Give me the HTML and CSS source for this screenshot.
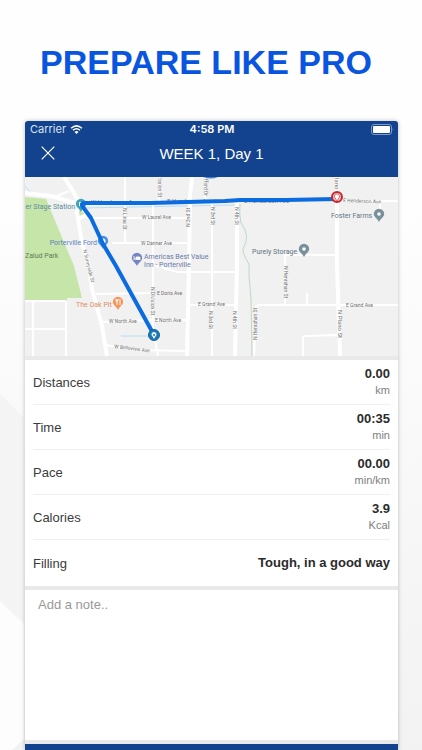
FILE: index.html
```
<!DOCTYPE html>
<html lang="en">
<head>
    <meta charset="UTF-8">
    <meta name="viewport" content="width=device-width, initial-scale=1.0">
    <title>Week 1, Day 1</title>
    <link rel="stylesheet" href="styles.css">
</head>
<body>
    <!-- page backdrop -->
    <svg class="backdrop" viewBox="0 0 422 750" preserveAspectRatio="none" aria-hidden="true">
        <defs>
            <linearGradient id="fade" x1="0" y1="0" x2="0" y2="1">
                <stop offset="0" stop-color="#fefefe"/>
                <stop offset="0.5" stop-color="#f8f8f8"/>
                <stop offset="1" stop-color="#f2f2f2"/>
            </linearGradient>
        </defs>
        <path fill="url(#fade)" d="M0 200H422V750H0Z"/>
        <path fill="#f4f4f4" d="M0 394L24 418V620L0 601Z"/>
        <path fill="#fdfdfd" d="M0 601L24 624V739L12 750H0Z"/>
    </svg>

    <h1 class="headline">PREPARE LIKE PRO</h1>

    <main class="phone">
        <header class="header">
            <div class="status-bar">
                <div class="carrier">
                    <span>Carrier</span>
                    <svg class="wifi" viewBox="0 0 12 9" aria-hidden="true">
                        <path d="M.6 3.2Q6-1.5 11.400 3.200M2.500 5.200Q6 2.200 9.500 5.200" fill="none" stroke="#fff" stroke-width="1.500"/>
                        <path d="M4 6.900Q6 5.200 8 6.900L6 9Z" fill="#fff"/>
                    </svg>
                </div>
                <span class="clock">4:58 PM</span>
                <svg class="battery" viewBox="0 0 23 11" aria-hidden="true">
                    <rect x=".5" y=".5" width="20" height="10" rx="2.500" fill="none" stroke="#7f98c4"/>
                    <rect x="2" y="2" width="17" height="7" rx="1" fill="#fff"/>
                    <path d="M21.700 4Q23 5.500 21.700 7Z" fill="#7f98c4"/>
                </svg>
            </div>
            <div class="nav-bar">
                <button type="button" class="close" aria-label="Close">
                    <svg viewBox="0 0 14 14"><path d="M.7 .7L13.300 13.300M13.300 .7L.7 13.300" stroke="#fff" stroke-width="1.200"/></svg>
                </button>
                <h2>WEEK 1, Day 1</h2>
            </div>
        </header>

        <svg class="map" viewBox="25 177 373 179" preserveAspectRatio="xMidYMid slice" role="img" aria-label="Route map">
            <defs>
                <path id="pin" d="M0-5.200A5.200 5.200 0 0 1 5.200 0C5.200 3 1.500 4.500 0 8C-1.500 4.500-5.200 3-5.200 0A5.200 5.200 0 0 1 0-5.200Z"/>
            </defs>
            <rect x="25" y="177" width="373" height="179" fill="#f1f1f1"/>

            <!-- parks and water -->
            <path fill="#c5e5a9" d="M25 197L46 199L74 266L82 298H67V301H25ZM76 208L85 214L78 219Z"/>
            <g class="water">
                <path d="M24 185L32 194M84 208L235 205M238 204L238 266L236 356M121 336H148"/>
            </g>
            <path fill="none" stroke="#bfd8c0" d="M240 204Q239 214 241 223Q251 236 243 249Q243 255 249 264V276L251 299L252 356"/>

            <!-- streets -->
            <g class="road">
                <path d="M125 177V243M86 218H187M112 243H187M33 301V356M66 301V356M25 301H66M25 329H66M96 294L154 293M101 322L154 320H187M106 345L133 350L187 351M153 205V330L158 356M154 265L177 272H235M212 203V356M187 305H235M285 305V255H337M307 293V304M303 356V338Q303 336 306 336L338 335M340 201H398M380 201V210M254 356L256 308Q256 305 260 305H398M57 196L69 191M159 177V201M205 177V201"/>
            </g>
            <g class="road road-wide">
                <path d="M64 177L74 193L79 202M25 193L51 196L79 204M79 204L77 212L82 243L89 266L92 289L102 326L107 356M78 219L86 215M192 177L190 196L189 266L187 356M237 203V266L235 356"/>
            </g>
            <path class="road road-wide" d="M337 177V266L340 356"/>
            <path d="M203 177H218Q211 180 203 177Z" fill="#4a7fd0"/>

            <!-- street names -->
            <g class="street">
                <text transform="translate(343 202) rotate(2)">E Henderson Ave</text>
                <text x="142" y="219">W Laurel Ave</text>
                <text x="141" y="245">W Danner Ave</text>
                <text x="157" y="295">E Doris Ave</text>
                <text x="155" y="322">E North Ave</text>
                <text x="109" y="323">W North Ave</text>
                <text transform="translate(114 348) rotate(7)">W Belleview Ave</text>
                <text x="198" y="306">E Grand Ave</text>
                <text x="346" y="307">E Grand Ave</text>
                <text transform="translate(123 208) rotate(90)">N Lime St</text>
                <text transform="translate(158 178) rotate(90)">ission St</text>
                <text transform="translate(204 179) rotate(90)">fford Dr</text>
                <text transform="translate(190 227) rotate(-90)">N 2nd St</text>
                <text transform="translate(211 207) rotate(90)">N 3rd St</text>
                <text transform="translate(235 207) rotate(90)">N 4th St</text>
                <text transform="translate(209 311) rotate(90)">N 3rd St</text>
                <text transform="translate(233 311) rotate(90)">N 4th St</text>
                <text transform="translate(151 287) rotate(90)">N Division St</text>
                <text transform="translate(83 250) rotate(76)">N Sunnyside St</text>
                <text transform="translate(257 340) rotate(-90)">N Henrahan St</text>
                <text transform="translate(284 266) rotate(90)">N Henrahan St</text>
            </g>
            <g class="street street-large">
                <text x="91" y="204">W Henderson Ave</text>
                <text x="167" y="203">E Henderson Ave</text>
                <text x="244" y="203">E Henderson Ave</text>
                <text transform="translate(338 310) rotate(90)">N Plano St</text>
                <text transform="translate(335 178) rotate(90)">lano</text>
            </g>

            <!-- places -->
            <g class="place">
                <text x="75" y="209" text-anchor="end" fill="#5b8e9c">er Stage Station</text>
                <text x="97" y="245" text-anchor="end" fill="#5d83c0">Porterville Ford</text>
                <text x="25" y="258" fill="#5f7d58">Zalud Park</text>
                <text x="144" y="259" fill="#6878a8">Americas Best Value</text>
                <text x="144" y="267" fill="#6878a8">Inn - Porterville</text>
                <text x="76" y="307" fill="#df8b61">The Oak Pit</text>
                <text x="252" y="254" fill="#627582">Purely Storage</text>
                <text x="331" y="218" fill="#627582">Foster Farms</text>
            </g>
            <use href="#pin" x="81" y="204" fill="#42a5b5"/>
            <rect x="79" y="202" width="4" height="4" fill="#fff"/>
            <use href="#pin" x="103" y="241" fill="#4a90e2"/>
            <circle cx="103" cy="241" r="2.500" fill="#fff"/>
            <use href="#pin" x="137" y="258" fill="#7386c1"/>
            <path d="M134 256V260M134 259H140V260M136 257H140V259H136Z" fill="#fff" stroke="#fff" stroke-width=".8"/>
            <use href="#pin" x="118" y="302" fill="#f4975f"/>
            <path d="M116 299V301Q117 302 118 301V299M117 299V305M120 299V305" fill="none" stroke="#fff" stroke-width=".9"/>
            <use href="#pin" x="304" y="249" fill="#78909c"/>
            <circle cx="304" cy="249" r="1.800" fill="#fff"/>
            <use href="#pin" x="379" y="214" fill="#78909c"/>
            <circle cx="379" cy="214" r="1.800" fill="#fff"/>

            <!-- route -->
            <path class="route" d="M337 199L285 200L240 200L225 201L150 203L85 203Q80 203 83 207L91 218L103 244L116 266L154 335"/>
            <circle cx="337" cy="197" r="5" fill="#e8c3c4" stroke="#c9252b" stroke-width="2"/>
            <path d="M337 194A2.500 2.500 0 0 1 339.500 197L337 201L334.500 197A2.500 2.500 0 0 1 337 194Z" fill="#fff" stroke="#c9252b" stroke-width=".6"/>
            <circle cx="154" cy="335" r="5.500" fill="#1b78b7" stroke="#17659d"/>
            <path d="M154 332A2.500 2.500 0 0 1 156.500 335L154 339L151.500 335A2.500 2.500 0 0 1 154 332Z" fill="#e7f4fb"/>
            <circle cx="154" cy="335" r="1" fill="#1b78b7"/>
        </svg>

        <dl class="stats">
            <div class="stat">
                <dt>Distances</dt>
                <dd><strong>0.00</strong><span>km</span></dd>
            </div>
            <div class="stat">
                <dt>Time</dt>
                <dd><strong>00:35</strong><span>min</span></dd>
            </div>
            <div class="stat">
                <dt>Pace</dt>
                <dd><strong>00.00</strong><span>min/km</span></dd>
            </div>
            <div class="stat">
                <dt>Calories</dt>
                <dd><strong>3.9</strong><span>Kcal</span></dd>
            </div>
            <div class="stat">
                <dt>Filling</dt>
                <dd><strong>Tough, in a good way</strong></dd>
            </div>
        </dl>

        <textarea class="note" aria-label="Note" placeholder="Add a note.."></textarea>

        <div class="bottom-bar"></div>
    </main>
</body>
</html>
```
FILE: styles.css
```
* {
    box-sizing: border-box;
}

body {
    display: flex;
    flex-direction: column;
    min-height: 100vh;
    margin: 0;
    background-color: #fefefe;
    font-family: "Liberation Sans", Arial, sans-serif;
    color: #3c3c3c;
}

.backdrop {
    position: absolute;
    top: 0;
    left: 0;
    width: 100%;
    height: 100%;
    z-index: -1;
}

.headline {
    margin: 0;
    padding: 42px 10px 39px 0;
    font-size: 34px;
    line-height: 40px;
    text-align: center;
    color: #0a55e0;
}

.phone {
    display: flex;
    flex-direction: column;
    flex: 1;
    margin: 0 24px 0 25px;
    background-color: #e9e9e9;
    border-radius: 3px 3px 0 0;
    box-shadow: 0 0 4px rgba(0, 0, 0, 0.25);
    overflow: hidden;
}

/* header */
.header {
    padding-bottom: 8px;
    background-color: #13438f;
    color: #fff;
}

.status-bar {
    display: grid;
    grid-template-columns: 1fr auto 1fr;
    align-items: center;
    height: 16px;
    padding: 0 4px 0 5px;
    font-family: Inter, sans-serif;
    font-size: 11px;
}

.carrier {
    display: flex;
    align-items: center;
    gap: 4px;
    color: #dce4f1;
}

.wifi {
    width: 13px;
    height: 9px;
}

.clock {
    font-weight: 600;
}

.battery {
    width: 23px;
    height: 11px;
    justify-self: end;
}

.nav-bar {
    display: grid;
    grid-template-columns: 1fr auto 1fr;
    align-items: center;
    height: 32px;
    padding: 0 16px;
}

.nav-bar h2 {
    margin: 0;
    font-size: 15px;
    font-weight: normal;
}

.close {
    width: 14px;
    height: 14px;
    padding: 0;
    border: none;
    background: none;
    cursor: pointer;
}

.close svg {
    display: block;
}

/* map */
.map {
    display: block;
    width: 100%;
    height: 179px;
    font-family: Roboto, sans-serif;
}

.road {
    fill: none;
    stroke: #fff;
    stroke-width: 2;
}

.road-wide {
    stroke-width: 4;
}

.water {
    fill: none;
    stroke: #b9dcf5;
    stroke-width: 1;
}

.street {
    font-size: 5px;
    fill: #707070;
}

.street-large {
    font-size: 6px;
}

.place {
    font-size: 7px;
}

.route {
    fill: none;
    stroke: #0b6be0;
    stroke-width: 4;
    stroke-linejoin: round;
}

/* stats */
.stats {
    margin: 4px 0;
    padding: 0 8px;
    background-color: #fff;
}

.stat {
    display: flex;
    justify-content: space-between;
    align-items: center;
    height: 45px;
    border-bottom: 1px solid #f0f0f0;
    font-size: 13px;
}

.stat:last-child {
    height: 46px;
    border-bottom: none;
}

.stat dd {
    display: flex;
    flex-direction: column;
    margin: 0;
    line-height: 16px;
    text-align: right;
}

.stat strong {
    color: #2b2b2b;
}

.stat dd span {
    font-size: 11px;
    color: #808080;
}

.note {
    display: block;
    width: 100%;
    height: 150px;
    padding: 7px 13px;
    border: none;
    outline: none;
    resize: none;
    background-color: #fff;
    font-family: inherit;
    font-size: 13px;
}

.note::placeholder {
    color: #999;
}

.bottom-bar {
    flex: 1;
    min-height: 6px;
    margin-top: 4px;
    background-color: #13438f;
}
```
